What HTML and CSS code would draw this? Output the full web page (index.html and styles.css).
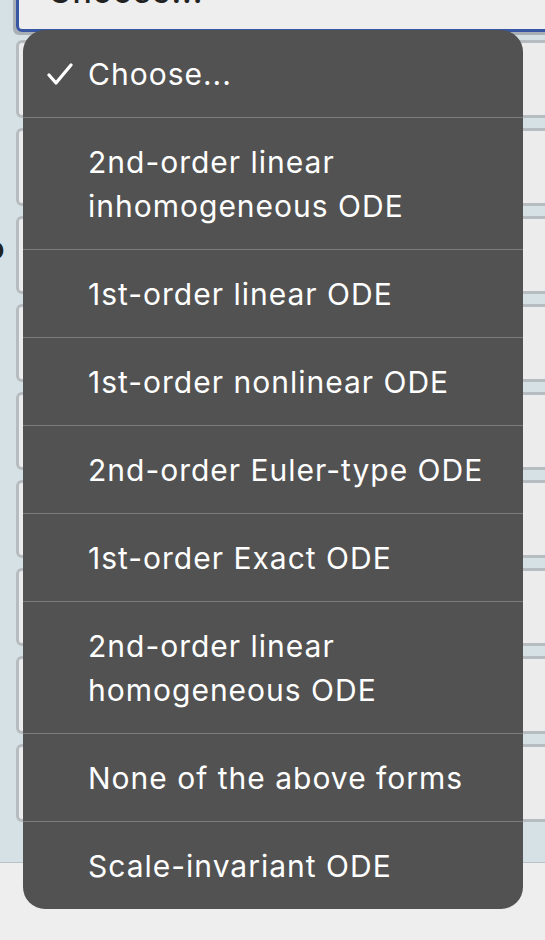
FILE: index.html
```html
<!DOCTYPE html>
<html lang="en">
<head>
    <meta charset="UTF-8">
    <title>ODE classifier</title>
    <link rel="stylesheet" href="styles.css">
</head>
<body>
    <div class="page">
        <div class="form">
            <div class="form__select">Choose...</div>
            <div class="form__row"><div class="form__side"></div><div class="form__box"></div></div>
            <div class="form__row"><div class="form__side"></div><div class="form__box"></div></div>
            <div class="form__row"><div class="form__side"><span class="form__mark">o</span></div><div class="form__box"></div></div>
            <div class="form__row"><div class="form__side"></div><div class="form__box"></div></div>
            <div class="form__row"><div class="form__side"></div><div class="form__box"></div></div>
            <div class="form__row"><div class="form__side"></div><div class="form__box"></div></div>
            <div class="form__row"><div class="form__side"></div><div class="form__box"></div></div>
            <div class="form__row"><div class="form__side"></div><div class="form__box"></div></div>
            <div class="form__row"><div class="form__side"></div><div class="form__box"></div></div>
        </div>
    </div>

    <ul class="menu">
        <li class="menu__item menu__item--first">
            <span class="menu__check">
                <svg width="26" height="22" viewBox="0 0 26 22"><polyline points="2,12 9,20 24,2" fill="none" stroke="#fff" stroke-width="3.2" stroke-linecap="round" stroke-linejoin="round"/></svg>
            </span>
            <span class="menu__text">Choose...</span>
        </li>
        <li class="menu__item menu__item--double"><span class="menu__check"></span><span class="menu__text">2nd-order linear<br>inhomogeneous ODE</span></li>
        <li class="menu__item"><span class="menu__check"></span><span class="menu__text">1st-order linear ODE</span></li>
        <li class="menu__item"><span class="menu__check"></span><span class="menu__text">1st-order nonlinear ODE</span></li>
        <li class="menu__item"><span class="menu__check"></span><span class="menu__text">2nd-order Euler-type ODE</span></li>
        <li class="menu__item"><span class="menu__check"></span><span class="menu__text">1st-order Exact ODE</span></li>
        <li class="menu__item menu__item--double"><span class="menu__check"></span><span class="menu__text">2nd-order linear<br>homogeneous ODE</span></li>
        <li class="menu__item"><span class="menu__check"></span><span class="menu__text">None of the above forms</span></li>
        <li class="menu__item"><span class="menu__check"></span><span class="menu__text">Scale-invariant ODE</span></li>
    </ul>
</body>
</html>
```

FILE: styles.css
```css
html, body{
    margin: 0;
    padding: 0;
    overflow: hidden;
    background: #eeeeee;
    font-family: Inter, "Liberation Sans", sans-serif;
}
.page{
    height: 862px;
    background: #d5e1e5;
    border-bottom: 1px solid #b9c3c7;
    overflow: hidden;
}
.form{
    width: 640px;
}
.form__select{
    margin: -48px 0 8px 16px;
    height: 80px;
    padding: 19px 0 0 29px;
    box-sizing: border-box;
    border: 3px solid #3857a3;
    border-radius: 6px;
    background: #eeeeee;
    box-shadow: -3px 3px 0 #a9b0b5;
    font-size: 32px;
    font-weight: 500;
    letter-spacing: 1px;
    line-height: 36px;
    color: #222;
}
.form__row{
    display: flex;
    margin-bottom: 10px;
}
.form__side{
    width: 16px;
    overflow: hidden;
    display: flex;
    align-items: center;
}
.form__mark{
    margin: 0 0 14px -14px;
    font-size: 30px;
    font-weight: bold;
    line-height: 30px;
    color: #222;
}
.form__box{
    flex: 1;
    height: 78px;
    box-sizing: border-box;
    border: 3px solid #b7bcc0;
    border-radius: 6px;
    background: #ececec;
}
.menu{
    position: absolute;
    left: 23px;
    top: 30px;
    width: 500px;
    margin: 0;
    padding: 0;
    list-style: none;
    background: #525252;
    border-radius: 22px;
    overflow: hidden;
    color: #fff;
    font-size: 30px;
    letter-spacing: 1px;
}
.menu__item{
    display: flex;
    align-items: center;
    height: 88px;
    box-sizing: border-box;
    border-top: 1px solid #7c7c7c;
    line-height: 44px;
}
.menu__item--first{
    height: 87px;
    border-top: none;
}
.menu__item--double{
    height: 132px;
}
.menu__check{
    width: 65px;
    padding-left: 24px;
    box-sizing: border-box;
    display: flex;
    align-items: center;
}
```
